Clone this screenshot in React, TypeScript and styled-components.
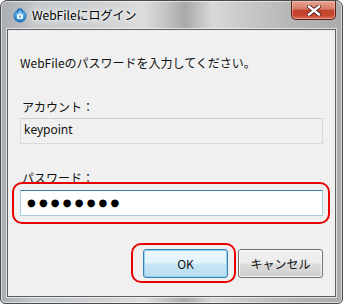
import React from "react";
import styled, { createGlobalStyle } from "styled-components";

const Global = createGlobalStyle`
  html, body { margin: 0; padding: 0; background: #ffffff; }
  body { font-family: "Noto Sans CJK JP", "Noto Sans", sans-serif; }
`;

const Window = styled.div`
  position: relative;
  width: 343px;
  height: 304px;
  box-sizing: border-box;
  border: 1px solid #4a4a4a;
  border-radius: 7px 7px 5px 5px;
  background:
    radial-gradient(ellipse 40px 60px at 222px 70px, rgba(235, 228, 170, 0.55), rgba(235, 228, 170, 0) 70%),
    linear-gradient(90deg, #a9adb1 0%, #c4c8cb 10%, #cfd1d3 30%, #dcdcdc 42%, #bcbcbc 50%, #a9a9a9 54%, #d8d8d8 62%, #c8c8c8 72%, #b6b6b6 85%, #acacac 100%);
  box-shadow: inset 0 0 0 1px rgba(255, 255, 255, 0.55);
  display: flex;
  flex-direction: column;
  padding: 0 6px 6px 6px;
  overflow: hidden;
`;

const TitleBar = styled.div`
  height: 28px;
  display: flex;
  align-items: center;
  gap: 4px;
  padding-left: 5px;
  flex: none;
`;

const Title = styled.span`
  font-size: 12px;
  color: #000;
  line-height: 16px;
  margin-top: -1px;
  text-shadow: 0 0 6px #ffffff, 0 0 10px #ffffff, 0 0 3px #ffffff;
`;

const CloseButton = styled.div`
  position: absolute;
  top: 0;
  right: 6px;
  width: 45px;
  height: 19px;
  box-sizing: border-box;
  border: 1px solid #5a2018;
  border-top: none;
  border-radius: 0 0 5px 5px;
  background: linear-gradient(180deg, #e8a593 0%, #d47a65 45%, #c0402a 52%, #c8482f 80%, #d9735a 100%);
  box-shadow: inset 0 0 0 1px rgba(255, 210, 200, 0.45);
  display: flex;
  align-items: center;
  justify-content: center;
`;

const Panel = styled.div`
  flex: 1;
  box-sizing: border-box;
  border: 1px solid #5f5f5f;
  background: #f0f0f0;
  box-shadow: 0 0 0 1px rgba(255, 255, 255, 0.6);
  display: flex;
  flex-direction: column;
  padding: 25px 12px 0 12px;
`;

const Message = styled.div`
  font-size: 12px;
  line-height: 16px;
  color: #111;
`;

const Label = styled.div<{ $top: number }>`
  font-size: 12px;
  line-height: 16px;
  color: #111;
  margin-top: ${(p) => p.$top}px;
  padding-left: 2px;
`;

const ReadonlyField = styled.div`
  margin-top: 3px;
  height: 26px;
  box-sizing: border-box;
  border: 1px solid #d9d9d9;
  border-top-color: #cfcfcf;
  background: #f0f0f0;
  font-size: 12px;
  line-height: 22px;
  padding-left: 3px;
  color: #111;
  font-family: "Noto Sans", "Noto Sans CJK JP", sans-serif;
`;

const Highlight = styled.div<{ $l: number; $r: number; $t: number; $b: number }>`
  position: relative;
  &::after {
    content: "";
    position: absolute;
    left: -${(p) => p.$l}px;
    right: -${(p) => p.$r}px;
    top: -${(p) => p.$t}px;
    bottom: -${(p) => p.$b}px;
    border: 2px solid #ea0000;
    border-radius: 10px;
    pointer-events: none;
  }
`;

const PasswordWrap = styled(Highlight)`
  margin-top: 4px;
`;

const PasswordField = styled.div`
  height: 26px;
  box-sizing: border-box;
  border: 1px solid #a6cbe5;
  border-top-color: #3d7bad;
  background: #ffffff;
  display: flex;
  align-items: center;
  padding-left: 6px;
`;

const Dots = styled.span`
  font-family: "DejaVu Sans", sans-serif;
  font-size: 10px;
  letter-spacing: 3.2px;
  color: #000;
  line-height: 1;
`;

const ButtonRow = styled.div`
  margin-top: 33px;
  display: flex;
  justify-content: flex-end;
  gap: 10px;
`;

const Button = styled.div<{ $primary?: boolean }>`
  width: 85px;
  height: 29px;
  box-sizing: border-box;
  border: 1px solid ${(p) => (p.$primary ? "#3c7fb1" : "#707070")};
  border-radius: 3px;
  background: ${(p) =>
    p.$primary
      ? "linear-gradient(180deg, #eef8fd 0%, #e2f2fb 48%, #c7e6f6 52%, #b9deef 100%)"
      : "linear-gradient(180deg, #f2f2f2 0%, #ebebeb 48%, #dddddd 52%, #cfcfcf 100%)"};
  box-shadow: inset 0 0 0 1px ${(p) => (p.$primary ? "#8fd3f5" : "rgba(255,255,255,0.8)")};
  display: flex;
  align-items: center;
  justify-content: center;
  font-size: 12px;
  color: #111;
`;

const AppIcon = () => (
  <svg width="16" height="16" viewBox="0 0 16 16">
    <defs>
      <radialGradient id="ig" cx="50%" cy="40%" r="60%">
        <stop offset="0%" stopColor="#bfe8ff" />
        <stop offset="60%" stopColor="#3a9be0" />
        <stop offset="100%" stopColor="#1c5fa8" />
      </radialGradient>
    </defs>
    <circle cx="8" cy="9" r="6.5" fill="url(#ig)" />
    <path d="M5.5 6 V4.5 a2.5 2.5 0 0 1 5 0 V6" fill="none" stroke="#2a6fb8" strokeWidth="1.4" />
    <rect x="5" y="7.5" width="6" height="4.5" rx="1" fill="#ffffff" opacity="0.9" />
    <rect x="7.4" y="8.6" width="1.2" height="2.2" fill="#2a6fb8" />
  </svg>
);

const CloseGlyph = () => (
  <svg width="14" height="11" viewBox="0 0 14 11">
    <path d="M2 1.5 L12 9.5 M12 1.5 L2 9.5" stroke="#4a1a12" strokeWidth="4.2" strokeLinecap="square" />
    <path d="M2 1.5 L12 9.5 M12 1.5 L2 9.5" stroke="#ffffff" strokeWidth="2.4" strokeLinecap="square" />
  </svg>
);

export default function App() {
  return (
    <>
      <Global />
      <Window>
        <TitleBar>
          <AppIcon />
          <Title>WebFileにログイン</Title>
        </TitleBar>
        <CloseButton>
          <CloseGlyph />
        </CloseButton>
        <Panel>
          <Message>WebFileのパスワードを入力してください。</Message>
          <Label $top={28}>アカウント：</Label>
          <ReadonlyField>keypoint</ReadonlyField>
          <Label $top={26}>パスワード：</Label>
          <PasswordWrap $l={8} $r={7} $t={8} $b={8}>
            <PasswordField>
              <Dots>●●●●●●●●</Dots>
            </PasswordField>
          </PasswordWrap>
          <ButtonRow>
            <Highlight $l={12} $r={8} $t={6} $b={5}>
              <Button $primary>OK</Button>
            </Highlight>
            <Button>キャンセル</Button>
          </ButtonRow>
        </Panel>
      </Window>
    </>
  );
}
